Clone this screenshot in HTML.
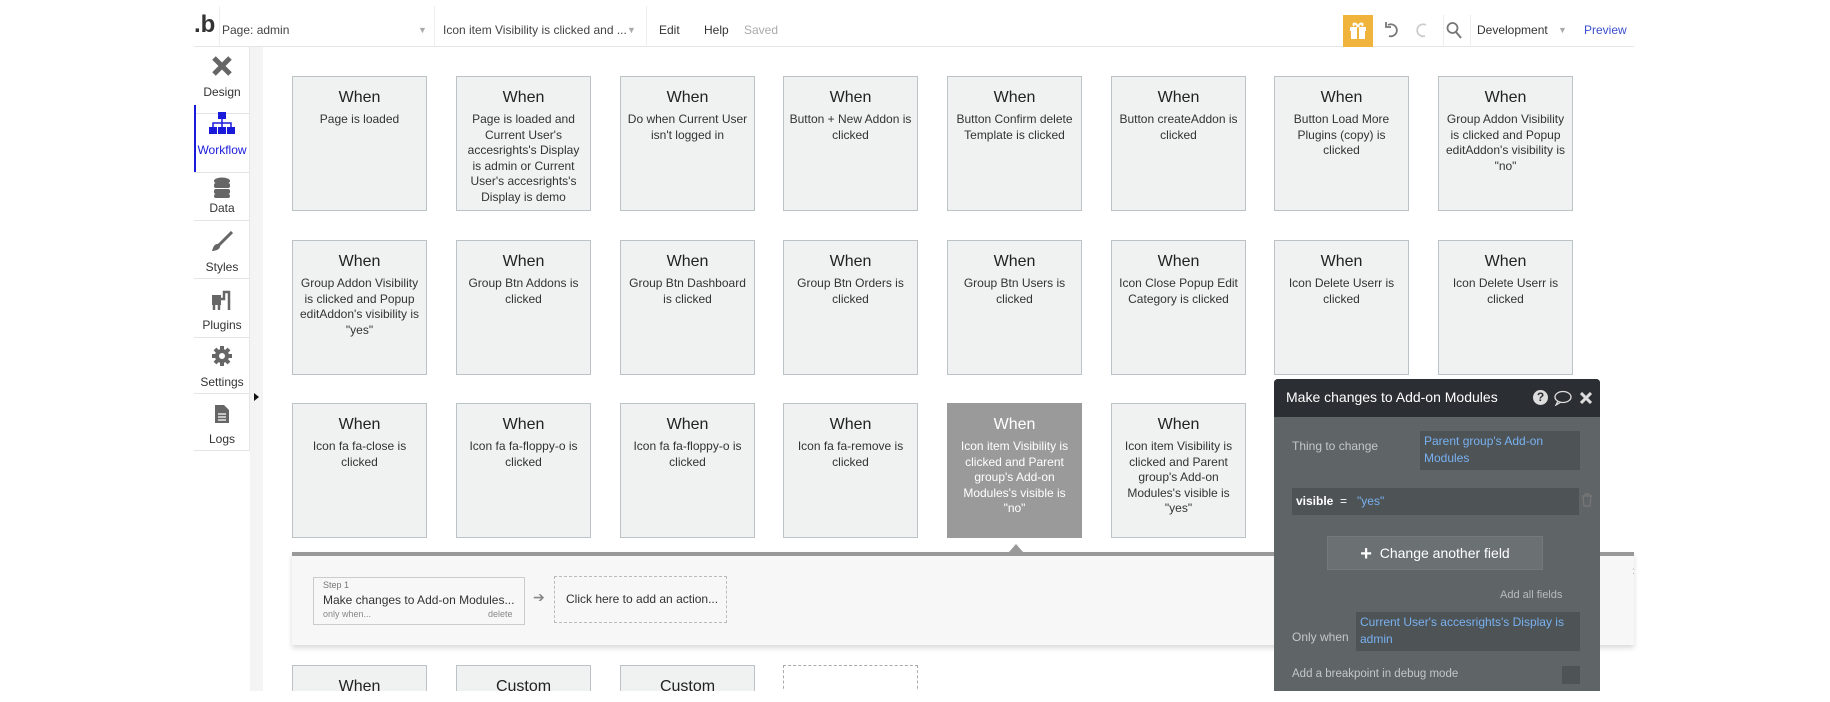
<!DOCTYPE html>
<html><head><meta charset="utf-8">
<style>
*{box-sizing:border-box;margin:0;padding:0}
html,body{width:1830px;height:702px;overflow:hidden}
body{background:#fff;font-family:"Liberation Sans",Arial,sans-serif;color:#333}
#w{position:relative;width:1830px;height:702px;overflow:hidden}
.a{position:absolute}
.top{left:194px;top:0;width:1440px;height:47px;border-bottom:1px solid #e6e6e6}
.tt{font-size:12px;color:#444;top:23px}
.sb{left:194px;top:47px;width:56px;height:404px;border-right:1px solid #e6e6e6}
.strip{left:250px;top:47px;width:13px;height:644px;background:#f4f4f4}
.it{position:absolute;left:0;width:56px;text-align:center;font-size:12px;color:#333}
.sep{position:absolute;left:0;width:56px;height:1px;background:#e4e4e4}
.card{position:absolute;width:135px;height:135px;background:#f0f1f1;border:1px solid #bcc3c6;text-align:center}
.card h{display:block;font-size:16px;color:#222;margin-top:11px;line-height:19px}
.card p{font-size:12px;color:#333;line-height:15.5px;margin-top:5px;padding:0 5px}
.card.sel{background:#9a9a9a;border-color:#9a9a9a}
.card.sel h,.card.sel p{color:#fff}
.pop{left:1274px;top:379px;width:326px;height:330px;background:#5f6467;border-radius:4px 4px 0 0}
.ph{left:0;top:0;width:326px;height:38px;background:#2b2f33;border-radius:4px 4px 0 0;color:#fff;font-size:14px;padding:10px 0 0 12px}
.pl{color:#c4c7c9;font-size:12px}
.bx{background:#4e5356;color:#78b1f0;font-size:12px;line-height:17px;padding:2px 4px}
</style></head><body><div id="w">
<div class="a top"></div>
<div class="a" style="left:194px;top:13px;font-size:24px;font-weight:bold;color:#333;line-height:24px">.b</div>
<div class="a" style="left:219px;top:6px;width:1px;height:41px;background:#eee"></div>
<div class="a tt" style="left:222px">Page: admin</div>
<div class="a" style="left:418px;top:25px;font-size:9px;color:#aaa">▼</div>
<div class="a" style="left:434px;top:6px;width:1px;height:41px;background:#eee"></div>
<div class="a tt" style="left:443px">Icon item Visibility is clicked and ...</div>
<div class="a" style="left:627px;top:25px;font-size:9px;color:#aaa">▼</div>
<div class="a" style="left:646px;top:6px;width:1px;height:41px;background:#eee"></div>
<div class="a tt" style="left:659px;color:#333">Edit</div>
<div class="a tt" style="left:704px;color:#333">Help</div>
<div class="a tt" style="left:744px;color:#aaa">Saved</div>
<div class="a" style="left:1343px;top:15px;width:30px;height:32px;background:#f0b43c"></div>
<svg class="a" style="left:1348px;top:20px" width="20" height="20" viewBox="0 0 20 20"><rect x="2" y="7" width="16" height="4" fill="#fff"/><rect x="3" y="11" width="14" height="8" fill="#fff"/><rect x="9" y="7" width="2" height="12" fill="#f0b43c"/><path d="M10 7C8 2 4 3 6 6M10 7C12 2 16 3 14 6" stroke="#fff" stroke-width="2" fill="none"/></svg>
<svg class="a" style="left:1384px;top:21px" width="16" height="18" viewBox="0 0 16 18"><path d="M4 4A6 6 0 1 1 5 15" stroke="#777" stroke-width="1.8" fill="none"/><path d="M2 1V6H7" stroke="#777" stroke-width="1.8" fill="none"/></svg>
<svg class="a" style="left:1414px;top:21px" width="16" height="18" viewBox="0 0 16 18"><path d="M12 4A6 6 0 1 0 11 15" stroke="#ccc" stroke-width="1.8" fill="none"/></svg>
<div class="a" style="left:1443px;top:15px;width:1px;height:32px;background:#eee"></div>
<svg class="a" style="left:1446px;top:21px" width="16" height="18" viewBox="0 0 16 18"><circle cx="6.5" cy="7" r="5" stroke="#777" stroke-width="1.8" fill="none"/><path d="M10 11L15 17" stroke="#777" stroke-width="2"/></svg>
<div class="a" style="left:1470px;top:15px;width:1px;height:32px;background:#eee"></div>
<div class="a tt" style="left:1477px;color:#333">Development</div>
<div class="a" style="left:1558px;top:25px;font-size:9px;color:#aaa">▼</div>
<div class="a tt" style="left:1584px;color:#3b4ecf">Preview</div>

<div class="a sb">
<svg style="position:absolute;left:17px;top:9px" width="22" height="20" viewBox="0 0 22 20"><path d="M3 2L19 18M19 2L3 18" stroke="#666" stroke-width="5"/></svg>
<div class="it" style="top:38px">Design</div>
<div class="sep" style="top:66px"></div>
<div style="position:absolute;left:0;top:58px;width:2px;height:67px;background:#1a1adb"></div>
<svg style="position:absolute;left:15px;top:64px" width="26" height="24" viewBox="0 0 26 24"><rect x="9" y="1" width="8" height="7" fill="#1a1adb"/><path d="M13 8V12M4 16V12H22V16M13 12V16" stroke="#1a1adb" stroke-width="1.5" fill="none"/><rect x="0" y="16" width="8" height="7" fill="#1a1adb"/><rect x="9" y="16" width="8" height="7" fill="#1a1adb"/><rect x="18" y="16" width="8" height="7" fill="#1a1adb"/></svg>
<div class="it" style="top:96px;color:#1a1adb">Workflow</div>
<div class="sep" style="top:125px"></div>
<svg style="position:absolute;left:19px;top:130px" width="18" height="22" viewBox="0 0 18 22"><ellipse cx="9" cy="4" rx="8" ry="3.5" fill="#666"/><rect x="1" y="6" width="16" height="5" rx="2" fill="#666"/><rect x="1" y="12" width="16" height="5" rx="2" fill="#666"/><rect x="1" y="17" width="16" height="4" rx="2" fill="#666"/></svg>
<div class="it" style="top:154px">Data</div>
<div class="sep" style="top:173px"></div>
<svg style="position:absolute;left:17px;top:184px" width="22" height="22" viewBox="0 0 22 22"><path d="M21 1L8 14" stroke="#666" stroke-width="3"/><path d="M8 13C3 12 2 17 1 20C5 20 10 18 9 14Z" fill="#666"/></svg>
<div class="it" style="top:213px">Styles</div>
<div class="sep" style="top:231px"></div>
<svg style="position:absolute;left:17px;top:242px" width="22" height="22" viewBox="0 0 22 22"><rect x="1" y="6" width="9" height="10" fill="#666"/><path d="M3 16V21M8 16V21M10 10H13V3H18V21" stroke="#666" stroke-width="2.5" fill="none"/></svg>
<div class="it" style="top:271px">Plugins</div>
<div class="sep" style="top:290px"></div>
<svg style="position:absolute;left:17px;top:298px" width="22" height="22" viewBox="0 0 22 22"><circle cx="11" cy="11" r="7" fill="#666"/><path d="M11 1V21M1 11H21M4 4L18 18M18 4L4 18" stroke="#666" stroke-width="4"/><circle cx="11" cy="11" r="3" fill="#fff"/></svg>
<div class="it" style="top:328px">Settings</div>
<div class="sep" style="top:346px"></div>
<svg style="position:absolute;left:20px;top:357px" width="16" height="20" viewBox="0 0 16 20"><path d="M1 1H10L15 6V19H1Z" fill="#666"/><path d="M4 10H12M4 13H12M4 16H12" stroke="#fff" stroke-width="1.2"/></svg>
<div class="it" style="top:385px">Logs</div>
<div class="sep" style="top:403px"></div>
</div>
<div class="a strip"></div>
<div class="a" style="left:254px;top:393px;width:0;height:0;border-left:5px solid #111;border-top:4px solid transparent;border-bottom:4px solid transparent"></div>

<div class="card" style="left:292px;top:76px"><h>When</h><p>Page is loaded</p></div>
<div class="card" style="left:456px;top:76px"><h>When</h><p>Page is loaded and Current User's accesrights's Display is admin or Current User's accesrights's Display is demo</p></div>
<div class="card" style="left:620px;top:76px"><h>When</h><p>Do when Current User isn't logged in</p></div>
<div class="card" style="left:783px;top:76px"><h>When</h><p>Button + New Addon is clicked</p></div>
<div class="card" style="left:947px;top:76px"><h>When</h><p>Button Confirm delete Template is clicked</p></div>
<div class="card" style="left:1111px;top:76px"><h>When</h><p>Button createAddon is clicked</p></div>
<div class="card" style="left:1274px;top:76px"><h>When</h><p>Button Load More Plugins (copy) is clicked</p></div>
<div class="card" style="left:1438px;top:76px"><h>When</h><p>Group Addon Visibility is clicked and Popup editAddon's visibility is "no"</p></div>

<div class="card" style="left:292px;top:240px"><h>When</h><p>Group Addon Visibility is clicked and Popup editAddon's visibility is "yes"</p></div>
<div class="card" style="left:456px;top:240px"><h>When</h><p>Group Btn Addons is clicked</p></div>
<div class="card" style="left:620px;top:240px"><h>When</h><p>Group Btn Dashboard is clicked</p></div>
<div class="card" style="left:783px;top:240px"><h>When</h><p>Group Btn Orders is clicked</p></div>
<div class="card" style="left:947px;top:240px"><h>When</h><p>Group Btn Users is clicked</p></div>
<div class="card" style="left:1111px;top:240px"><h>When</h><p>Icon Close Popup Edit Category is clicked</p></div>
<div class="card" style="left:1274px;top:240px"><h>When</h><p>Icon Delete Userr is clicked</p></div>
<div class="card" style="left:1438px;top:240px"><h>When</h><p>Icon Delete Userr is clicked</p></div>

<div class="card" style="left:292px;top:403px"><h>When</h><p>Icon fa fa-close is clicked</p></div>
<div class="card" style="left:456px;top:403px"><h>When</h><p>Icon fa fa-floppy-o is clicked</p></div>
<div class="card" style="left:620px;top:403px"><h>When</h><p>Icon fa fa-floppy-o is clicked</p></div>
<div class="card" style="left:783px;top:403px"><h>When</h><p>Icon fa fa-remove is clicked</p></div>
<div class="card sel" style="left:947px;top:403px"><h>When</h><p>Icon item Visibility is clicked and Parent group's Add-on Modules's visible is "no"</p></div>
<div class="card" style="left:1111px;top:403px"><h>When</h><p>Icon item Visibility is clicked and Parent group's Add-on Modules's visible is "yes"</p></div>

<div class="a" style="left:292px;top:552px;width:1342px;height:93px;background:#f7f7f7;border-top:4px solid #999;box-shadow:0 3px 5px rgba(0,0,0,.15)"></div>
<div class="a" style="left:1009px;top:544px;width:0;height:0;border-bottom:8px solid #999;border-left:7px solid transparent;border-right:7px solid transparent"></div>
<div class="a" style="left:313px;top:577px;width:212px;height:48px;border:1px solid #ccc;background:#f7f7f7"></div>
<div class="a" style="left:323px;top:580px;font-size:9px;color:#777">Step 1</div>
<div class="a" style="left:323px;top:593px;font-size:12px;color:#333">Make changes to Add-on Modules...</div>
<div class="a" style="left:323px;top:609px;font-size:9px;color:#888">only when...</div>
<div class="a" style="left:488px;top:609px;font-size:9px;color:#888">delete</div>
<div class="a" style="left:533px;top:589px;font-size:14px;color:#888">➔</div>
<div class="a" style="left:554px;top:576px;width:173px;height:47px;border:1px dashed #bbb"></div>
<div class="a" style="left:566px;top:592px;font-size:12px;color:#333">Click here to add an action...</div>
<div class="a" style="left:1632px;top:566px;font-size:10px;color:#aaa">:</div>

<div class="card" style="left:292px;top:665px"><h>When</h></div>
<div class="card" style="left:456px;top:665px"><h>Custom</h></div>
<div class="card" style="left:620px;top:665px"><h>Custom</h></div>
<div class="a" style="left:783px;top:665px;width:135px;height:60px;border:1px dashed #aaa"></div>

<div class="a pop">
<div class="a ph">Make changes to Add-on Modules</div>
<div class="a" style="left:260px;top:0;width:66px;height:38px;background:#2b2f33;border-radius:0 4px 0 0"></div>
<div class="a" style="left:259px;top:11px;width:15px;height:15px;border-radius:50%;background:#ddd;color:#2b2f33;font-size:12px;font-weight:bold;text-align:center;line-height:15px">?</div>
<svg class="a" style="left:280px;top:11px" width="18" height="16" viewBox="0 0 18 16"><ellipse cx="9" cy="7" rx="8" ry="5.5" stroke="#ddd" stroke-width="1.3" fill="none"/><path d="M4 11L2 15L7 12" stroke="#ddd" stroke-width="1.3" fill="none"/></svg>
<svg class="a" style="left:306px;top:13px" width="12" height="12" viewBox="0 0 12 12"><path d="M1 1L11 11M11 1L1 11" stroke="#ddd" stroke-width="3"/></svg>
<div class="a pl" style="left:18px;top:60px">Thing to change</div>
<div class="a bx" style="left:146px;top:52px;width:160px;height:39px">Parent group's Add-on Modules</div>
<div class="a" style="left:18px;top:109px;width:287px;height:27px;background:#4e5356;font-size:12px;color:#fff;padding:6px 4px"><b>visible</b> &nbsp;= &nbsp; <span style="color:#78b1f0">"yes"</span></div>
<svg class="a" style="left:307px;top:114px" width="12" height="14" viewBox="0 0 12 14"><path d="M1 3H11M4 3V1H8V3M2 3L3 13H9L10 3" stroke="#777" stroke-width="1.2" fill="none"/></svg>
<div class="a" style="left:53px;top:157px;width:216px;height:34px;background:#6b7073;border:1px solid #74797c;color:#fff;font-size:14px;text-align:center;line-height:32px"><b style="font-size:20px;vertical-align:-2px">+</b>&nbsp; Change another field</div>
<div class="a pl" style="left:226px;top:210px;font-size:11px;color:#b8bbbd">Add all fields</div>
<div class="a pl" style="left:18px;top:251px">Only when</div>
<div class="a bx" style="left:82px;top:233px;width:224px;height:39px">Current User's accesrights's Display is admin</div>
<div class="a pl" style="left:18px;top:289px;font-size:11.5px">Add a breakpoint in debug mode</div>
<div class="a" style="left:288px;top:287px;width:18px;height:18px;background:#4e5356"></div>
</div>
<div class="a" style="left:0;top:691px;width:1830px;height:11px;background:#fff"></div>
</div></body></html>
